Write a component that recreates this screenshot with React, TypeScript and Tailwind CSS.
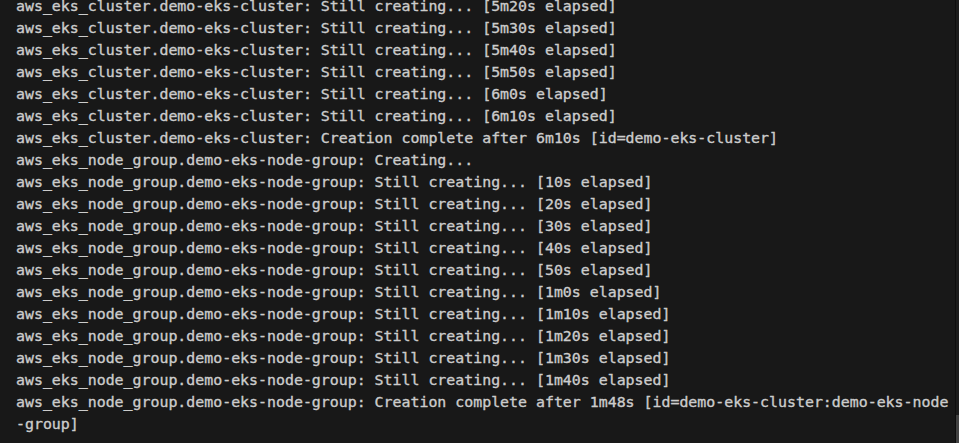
import React from "react";

const lines = [
  "aws_eks_cluster.demo-eks-cluster: Still creating... [5m20s elapsed]",
  "aws_eks_cluster.demo-eks-cluster: Still creating... [5m30s elapsed]",
  "aws_eks_cluster.demo-eks-cluster: Still creating... [5m40s elapsed]",
  "aws_eks_cluster.demo-eks-cluster: Still creating... [5m50s elapsed]",
  "aws_eks_cluster.demo-eks-cluster: Still creating... [6m0s elapsed]",
  "aws_eks_cluster.demo-eks-cluster: Still creating... [6m10s elapsed]",
  "aws_eks_cluster.demo-eks-cluster: Creation complete after 6m10s [id=demo-eks-cluster]",
  "aws_eks_node_group.demo-eks-node-group: Creating...",
  "aws_eks_node_group.demo-eks-node-group: Still creating... [10s elapsed]",
  "aws_eks_node_group.demo-eks-node-group: Still creating... [20s elapsed]",
  "aws_eks_node_group.demo-eks-node-group: Still creating... [30s elapsed]",
  "aws_eks_node_group.demo-eks-node-group: Still creating... [40s elapsed]",
  "aws_eks_node_group.demo-eks-node-group: Still creating... [50s elapsed]",
  "aws_eks_node_group.demo-eks-node-group: Still creating... [1m0s elapsed]",
  "aws_eks_node_group.demo-eks-node-group: Still creating... [1m10s elapsed]",
  "aws_eks_node_group.demo-eks-node-group: Still creating... [1m20s elapsed]",
  "aws_eks_node_group.demo-eks-node-group: Still creating... [1m30s elapsed]",
  "aws_eks_node_group.demo-eks-node-group: Still creating... [1m40s elapsed]",
  "aws_eks_node_group.demo-eks-node-group: Creation complete after 1m48s [id=demo-eks-cluster:demo-eks-node",
  "-group]",
];

export default function App() {
  return (
    <div className="flex h-[443px] w-[959px] overflow-hidden bg-[#181818]">
      <div className="flex-1 overflow-hidden pl-4">
        <div
          className="-mt-[5px] text-[14.9px] leading-[22px] text-[#cccccc] [-webkit-text-stroke:0.35px_#cccccc]"
          style={{ fontFamily: '"DejaVu Sans Mono", "Liberation Mono", monospace' }}
        >
          {lines.map((l, i) => (
            <div key={i} className="whitespace-pre">
              {l}
            </div>
          ))}
        </div>
      </div>
      <div className="flex w-[4px] flex-col justify-end border-l border-[#0e0e0e] bg-[#1c1c1c]">
        <div className="h-[28px] bg-[#424242]" />
      </div>
    </div>
  );
}
